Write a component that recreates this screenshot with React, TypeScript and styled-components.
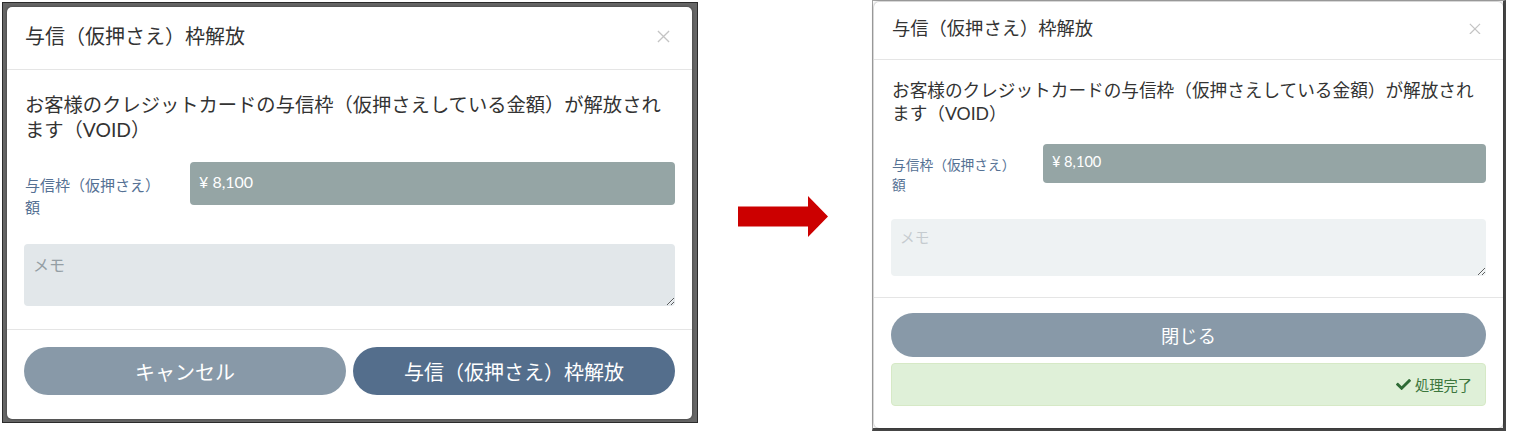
import React from 'react';
import styled, { createGlobalStyle } from 'styled-components';
import { FaCheck } from 'react-icons/fa';

// every vertical size and font size is scaled by --k, set on the modal
const s = (px: number) => `calc(${px}px * var(--k))`;

const TITLE = '与信（仮押さえ）枠解放';
const LEAD = 'お客様のクレジットカードの与信枠（仮押さえしている金額）が解放されます（VOID）';

const CloseIcon: React.FC = () => (
  <CloseSvg viewBox="0 0 14 14">
    <path d="M1 1 L13 13 M13 1 L1 13" />
  </CloseSvg>
);

interface DialogProps {
  k: number;
  done?: boolean;
}

const VoidDialog: React.FC<DialogProps> = ({ k, done }) => (
  <Modal style={{ '--k': k } as React.CSSProperties}>
    <Header>
      <Title>{TITLE}</Title>
      <CloseIcon />
    </Header>

    <Body>
      <Lead>{LEAD}</Lead>
      <FormRow>
        <FieldLabel>与信枠（仮押さえ）額</FieldLabel>
        <AmountField>¥ 8,100</AmountField>
      </FormRow>
      <Memo placeholder="メモ" $done={done} />
    </Body>

    <Footer>
      {done ? (
        <>
          <PillButton $tone="#8899a8">閉じる</PillButton>
          <DoneAlert>
            <FaCheck />
            処理完了
          </DoneAlert>
        </>
      ) : (
        <ButtonRow>
          <PillButton $tone="#8899a8">キャンセル</PillButton>
          <PillButton $tone="#546e8c">{TITLE}</PillButton>
        </ButtonRow>
      )}
    </Footer>
  </Modal>
);

const App: React.FC = () => (
  <>
    <GlobalStyle />
    <Page>
      <LeftFrame>
        <VoidDialog k={1} />
      </LeftFrame>
      <ArrowSlot>
        <svg width="90" height="41" viewBox="0 0 90 41">
          <polygon points="0,10.5 70,10.5 70,0 90,20.5 70,41 70,30.5 0,30.5" fill="#cc0000" />
        </svg>
      </ArrowSlot>
      <RightFrame>
        <VoidDialog k={0.915} done />
      </RightFrame>
    </Page>
  </>
);

const GlobalStyle = createGlobalStyle`
  * {
    box-sizing: border-box;
  }

  body {
    margin: 0;
    background: #fff;
    font-family: 'Lato', 'Noto Sans CJK JP', sans-serif;
  }
`;

const Page = styled.div`
  display: flex;
  align-items: flex-start;
  width: 1514px;
  height: 432px;
  overflow: hidden;
`;

const LeftFrame = styled.div`
  display: flex;
  width: 696px;
  height: 421px;
  margin: 2px 0 0 2px;
  padding: 4px 5px 3px 4px;
  background: #666;
  border: 1px solid #2b2b2b;
`;

const ArrowSlot = styled.div`
  display: flex;
  align-self: center;
  margin: 0 44px 0 40px;
`;

const RightFrame = styled.div`
  display: flex;
  width: 634px;
  height: 431px;
  padding: 1px 0 0 1px;
  border-top: 1px solid #a3a3a3;
  border-left: 1px solid #a3a3a3;
  border-right: 3px solid #474747;
  border-bottom: 3px solid #474747;
`;

const Modal = styled.div`
  flex: 1;
  display: flex;
  flex-direction: column;
  background: #fff;
  border-radius: 5px;
  box-shadow: 0 0 3px rgba(0, 0, 0, 0.45);
  overflow: hidden;
`;

const Header = styled.div`
  display: flex;
  align-items: center;
  justify-content: space-between;
  height: ${s(63)};
  padding: 0 22px ${s(4)} 18px;
  border-bottom: 1px solid #e5e5e5;
`;

const Title = styled.h4`
  margin: 0;
  font-size: ${s(20)};
  font-weight: 400;
  line-height: 1;
  color: #333;
`;

const CloseSvg = styled.svg`
  width: ${s(13)};
  height: ${s(13)};
  fill: none;
  stroke: #c4c4c4;
  stroke-width: 1.4;
`;

const Body = styled.div`
  display: flex;
  flex-direction: column;
  padding: ${s(22)} 17px ${s(23)};
`;

const Lead = styled.p`
  margin: 0 0 ${s(20)};
  padding-left: 1px;
  font-size: ${s(19.3)};
  line-height: ${s(25)};
  color: #333;
`;

const FormRow = styled.div`
  display: grid;
  grid-template-columns: ${s(166)} 1fr;
  align-items: start;
  height: ${s(56)};
`;

const FieldLabel = styled.label`
  padding: ${s(12)} ${s(24)} 0 1px;
  font-size: ${s(15)};
  line-height: ${s(22)};
  color: #557194;
`;

const AmountField = styled.div`
  height: ${s(43)};
  padding: 0 9px;
  background: #95a5a5;
  border-radius: 4px;
  font-size: ${s(16)};
  line-height: ${s(40)};
  color: #fff;
`;

const Memo = styled.textarea<{ $done?: boolean }>`
  display: block;
  width: 100%;
  height: ${s(62)};
  margin-top: ${s(26)};
  padding: ${s(9)} 9px;
  background: ${({ $done }) => ($done ? '#eef2f3' : '#e2e7ea')};
  border: none;
  border-radius: 4px;
  font-family: inherit;
  font-size: ${s(16)};
  line-height: ${s(24)};
  color: #333;
  outline: none;

  &::placeholder {
    color: ${({ $done }) => ($done ? '#c5cbcf' : '#949ea4')};
  }
`;

const Footer = styled.div`
  display: flex;
  flex-direction: column;
  gap: ${s(7)};
  padding: ${s(17)} 17px ${s(23)};
  border-top: 1px solid #e5e5e5;
`;

const ButtonRow = styled.div`
  display: grid;
  grid-template-columns: 1fr 1fr;
  gap: 7px;
`;

const PillButton = styled.button<{ $tone: string }>`
  flex-shrink: 0;
  height: ${s(48)};
  border: none;
  border-radius: ${s(24)};
  background: ${({ $tone }) => $tone};
  font-family: inherit;
  font-size: ${s(20)};
  color: #fff;
`;

const DoneAlert = styled.div`
  display: flex;
  align-items: center;
  justify-content: flex-end;
  gap: 4px;
  height: ${s(47)};
  padding-right: 13px;
  background: #dff0d8;
  border: 1px solid #d6e9c6;
  border-radius: 4px;
  font-size: ${s(15.6)};
  color: #3c763d;

  svg {
    width: 15px;
    height: 15px;
    color: #2f6b36;
  }
`;

export default App;
